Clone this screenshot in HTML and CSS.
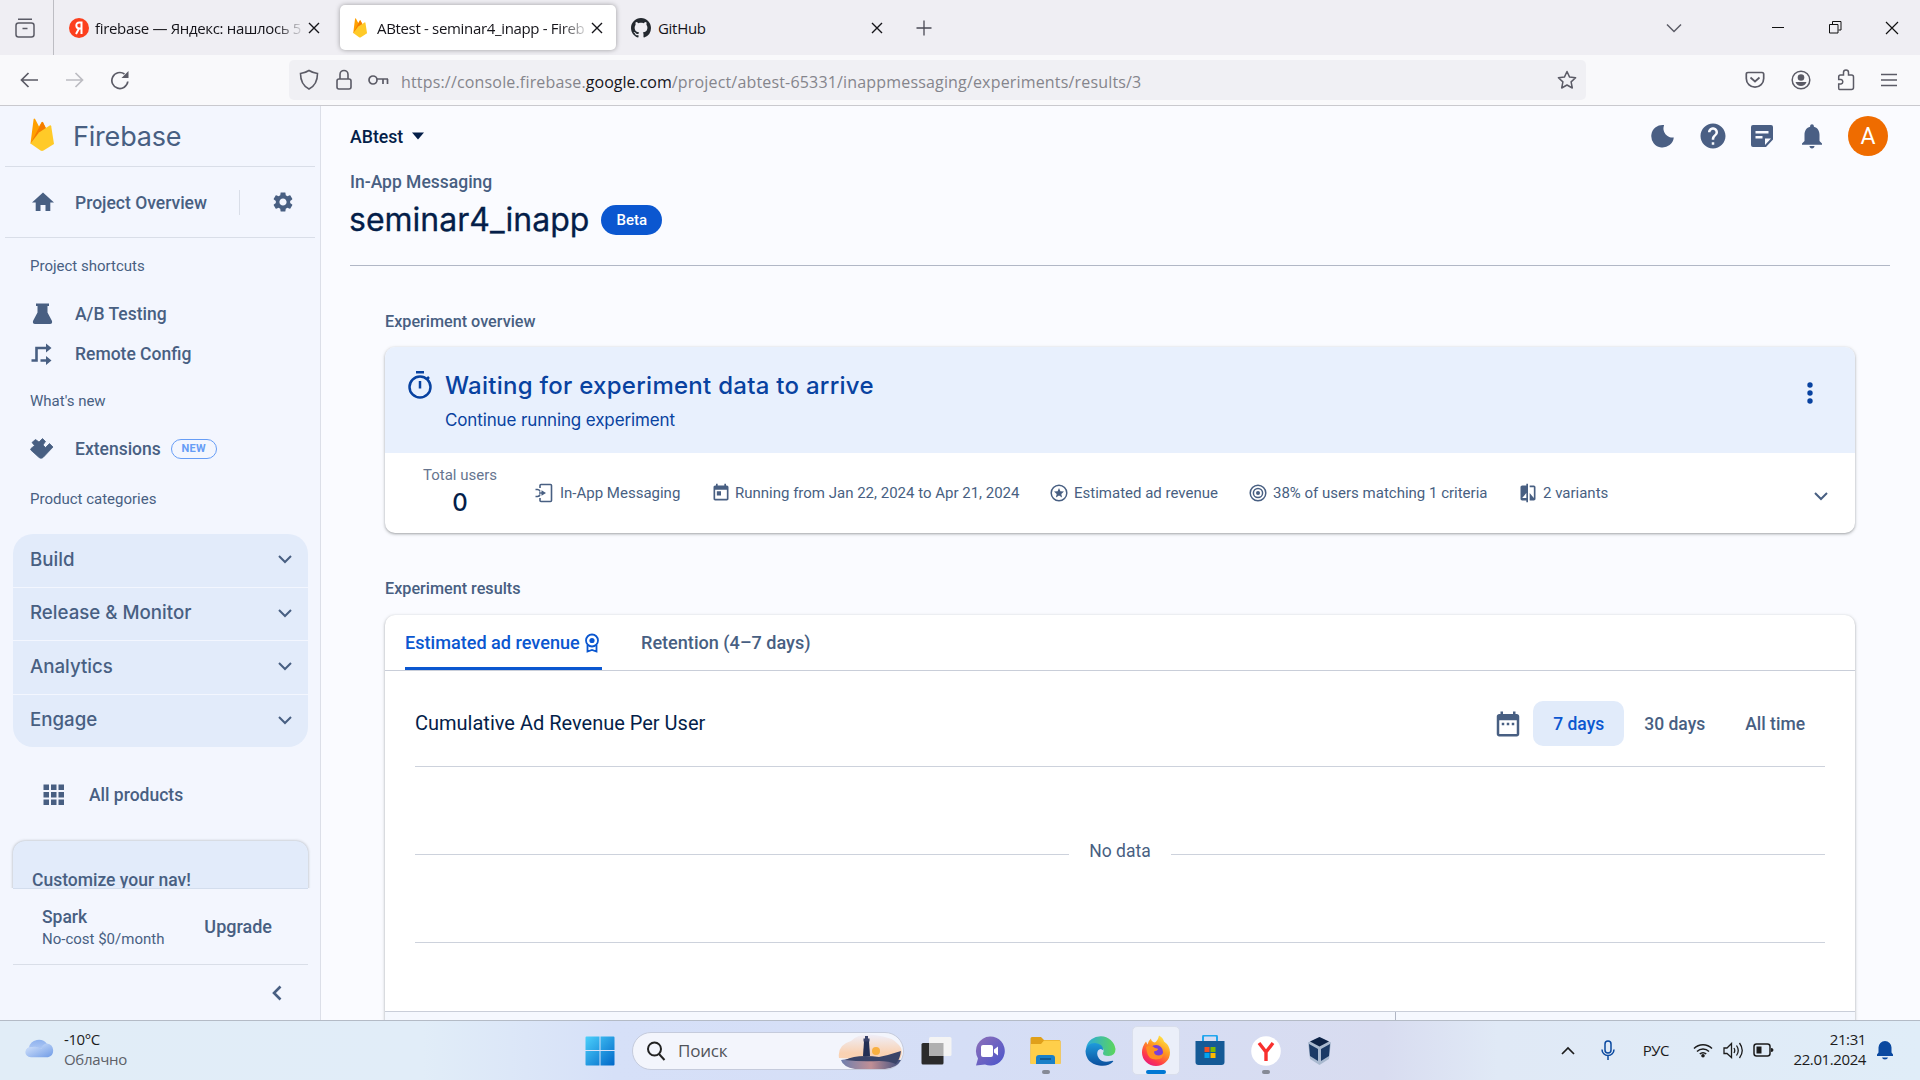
FILE: index.html
```html
<!DOCTYPE html>
<html lang="en">
<head>
<meta charset="utf-8">
<title>ABtest - seminar4_inapp - Firebase console</title>
<link rel="stylesheet" href="styles.css">
</head>
<body>
<svg class="defs" width="0" height="0">
  <defs>
    <symbol id="x" viewBox="0 0 12 12"><path d="M1 1l10 10M11 1L1 11" fill="none" stroke="currentColor" stroke-width="1.4"/></symbol>
    <symbol id="down" viewBox="0 0 14 9"><path d="M1 1l6 6 6-6" fill="none" stroke="currentColor" stroke-width="2"/></symbol>
    <symbol id="flame" viewBox="0 0 24 34">
      <path d="M.5 25.500L3.600 1.200q.5-1.500 1.500-.2L9 8.400l2.500-4.200q.8-1 1.500 0l6 12z" fill="#ffa000"/>
      <path d="M.5 25.500L11.800 4.500q.6-.8 1.200 0l4.500 9z" fill="#f57c00"/>
      <path d="M.5 25.500L9 14.500 19.700 7.600q1.200-.7 1.500.6L24 26l-10.500 6.600q-1.500.8-3 0z" fill="#ffca28"/>
    </symbol>
  </defs>
</svg>

<div class="tabstrip">
  <div class="view"><svg width="20" height="20" viewBox="0 0 20 20"><g fill="none" stroke="#5b5b66" stroke-width="1.500"><rect x="1" y="5" width="18" height="14" rx="2.500"/><path d="M3 1.200h14M7.500 10.500h5"/></g></svg></div>
  <div class="tab tab-first">
    <svg class="fav" width="20" height="20"><circle cx="10" cy="10" r="10" fill="#fc3f1d"/><path d="M12.500 16V4.500h-2.200c-4 0-4 6 .2 6h2M10 10.500L7 16" fill="none" stroke="#fff" stroke-width="2"/></svg>
    <span class="tab-title fade">firebase — Яндекс: нашлось 5</span>
    <svg class="close" width="12" height="12"><use href="#x"/></svg>
  </div>
  <div class="tab tab-active">
    <svg class="fav" width="18" height="20"><use href="#flame"/></svg>
    <span class="tab-title fade">ABtest - seminar4_inapp - Fireb</span>
    <svg class="close" width="12" height="12"><use href="#x"/></svg>
  </div>
  <div class="tab tab-last">
    <svg class="fav" width="20" height="20" viewBox="0 0 16 16"><path fill="#24292f" d="M8 0C3.580 0 0 3.580 0 8c0 3.540 2.290 6.530 5.470 7.590.4.070.55-.17.55-.38 0-.19-.01-.82-.01-1.490-2.010.37-2.530-.49-2.690-.94-.09-.23-.48-.94-.82-1.130-.28-.15-.68-.52-.01-.53.63-.01 1.080.58 1.230.82.72 1.210 1.870.87 2.330.66.070-.52.28-.87.51-1.070-1.780-.2-3.640-.89-3.640-3.950 0-.87.31-1.590.82-2.150-.08-.2-.36-1.020.08-2.120 0 0 .67-.21 2.200.82.64-.18 1.320-.27 2-.27.68 0 1.360.09 2 .27 1.530-1.040 2.200-.82 2.200-.82.44 1.100.16 1.920.08 2.120.51.56.82 1.270.82 2.150 0 3.070-1.870 3.750-3.650 3.950.29.25.54.73.54 1.480 0 1.070-.01 1.930-.01 2.200 0 .21.15.46.55.38A8.013 8.013 0 0 0 16 8c0-4.420-3.580-8-8-8z"/></svg>
    <span class="tab-title">GitHub</span>
    <svg class="close" width="12" height="12"><use href="#x"/></svg>
  </div>
  <svg class="plus" width="16" height="16"><path d="M8 .5v15M.5 8h15" stroke="#4a4a55" stroke-width="1.300"/></svg>
  <div class="window">
    <svg width="16" height="10"><path d="M1 1.500l7 7 7-7" fill="none" stroke="#5b5b66" stroke-width="1.500"/></svg>
    <svg width="12" height="12"><path d="M0 5.500h12" stroke="#111"/></svg>
    <svg width="13" height="13"><path d="M.5 3.500h8.500v8.500H.5zM3.500 3V.5H12V9H9.500" fill="none" stroke="#111"/></svg>
    <svg width="14" height="14"><path d="M1 1l12 12M13 1L1 13" stroke="#111" stroke-width="1.200"/></svg>
  </div>
</div>

<div class="toolbar">
  <div class="navbtns">
    <svg width="19" height="16"><path d="M18 8H1.500M8.500 1l-7 7 7 7" fill="none" stroke="#5b5b66" stroke-width="1.700"/></svg>
    <svg width="19" height="16"><path d="M1 8h16.500M10.500 1l7 7-7 7" fill="none" stroke="#bcbcc2" stroke-width="1.700"/></svg>
    <svg width="20" height="20"><path d="M17.800 11.500A8 8 0 1 1 14.500 4" fill="none" stroke="#5b5b66" stroke-width="1.700"/><path d="M18.500 1v7H11.500z" fill="#5b5b66"/></svg>
  </div>
  <div class="urlbar">
    <svg width="20" height="22"><path d="M10 1.500C13 3.500 16 4.200 18.500 4.500c0 7-2.500 12.500-8.500 15.500C4 17 1.500 11.500 1.500 4.500 4 4.200 7 3.500 10 1.500z" fill="none" stroke="#5b5b66" stroke-width="1.600"/></svg>
    <svg class="u2" width="16" height="22"><g fill="none" stroke="#5b5b66" stroke-width="1.600"><rect x="1" y="10" width="14" height="10" rx="2"/><path d="M4 10V5.500a4 4 0 0 1 8 0V10"/></g></svg>
    <svg class="u3" width="21" height="12"><g fill="none" stroke="#5b5b66" stroke-width="1.700"><circle cx="5" cy="6" r="4"/><path d="M9 5h11M15 5v5M19.500 5v5"/></g></svg>
    <span class="url">https://console.firebase.<b>google.com</b>/project/abtest-65331/inappmessaging/experiments/results/3</span>
    <svg class="star" width="20" height="20" viewBox="0 0 20 20"><path d="M10 1.500l2.600 5.600 6 .7-4.500 4.100 1.200 6.100L10 15l-5.300 3 1.200-6.100L1.400 7.800l6-.7z" fill="none" stroke="#5b5b66" stroke-width="1.500" stroke-linejoin="round"/></svg>
  </div>
  <div class="tools">
    <svg width="20" height="18"><g fill="none" stroke="#5b5b66" stroke-width="1.700"><path d="M3 1.500h14q1.700 0 1.700 1.700V7.500a8.700 8.700 0 0 1-17.400 0V3.200q0-1.700 1.700-1.700z"/><path d="M5.500 6.500L10 10.500l4.500-4"/></g></svg>
    <svg width="20" height="20"><circle cx="10" cy="10" r="8.800" fill="none" stroke="#5b5b66" stroke-width="1.500"/><circle cx="10" cy="7.500" r="3.300" fill="#5b5b66"/><path d="M4.500 12h11q-1.500 4-5.500 4t-5.500-4z" fill="#5b5b66"/></svg>
    <svg width="18" height="22"><path d="M2.500 20.500h12q2 0 2-2V8q0-2-2-2h-3V3.500a2 2 0 0 0-5 0V6H3.500Q1.700 6 1.700 8v2.500H4a2.300 2.300 0 0 1 0 4.500H1.700v4q0 1.500.8 1.500z" fill="none" stroke="#5b5b66" stroke-width="1.500"/></svg>
    <svg width="16" height="14"><path d="M0 1.500h16M0 7h16M0 12.500h16" stroke="#5b5b66" stroke-width="1.500"/></svg>
  </div>
</div>

<div class="page">
  <aside class="side">
    <div class="brand"><svg width="24" height="34"><use href="#flame"/></svg><span>Firebase</span></div>
    <div class="overview">
      <svg width="26" height="24" viewBox="0 0 26 24"><path d="M10.500 21v-6h5v6h4.800v-8.500H24L13 2.500 2 12.500h3.700V21z" fill="currentColor"/></svg>
      <span class="ov">Project Overview</span>
      <i></i>
      <svg width="24" height="24" viewBox="0 0 24 24"><path fill="currentColor" d="M19.140 12.940c.04-.3.060-.61.060-.94 0-.32-.02-.64-.07-.94l2.030-1.580c.18-.14.23-.41.12-.61l-1.920-3.320c-.12-.22-.37-.29-.59-.22l-2.390.96c-.5-.38-1.030-.7-1.620-.94l-.36-2.540c-.04-.24-.24-.41-.48-.41h-3.840c-.24 0-.43.17-.47.41l-.36 2.540c-.59.24-1.130.57-1.620.94l-2.390-.96c-.22-.08-.47 0-.59.22L2.740 8.870c-.12.21-.08.47.12.61l2.030 1.580c-.05.3-.09.63-.09.94s.02.64.070.94l-2.030 1.580c-.18.14-.23.41-.12.61l1.920 3.320c.12.22.37.29.59.22l2.390-.96c.5.38 1.030.7 1.620.94l.36 2.540c.05.24.24.41.48.41h3.840c.24 0 .44-.17.47-.41l.36-2.540c.59-.24 1.130-.56 1.620-.94l2.390.96c.22.08.47 0 .59-.22l1.920-3.320c.12-.22.070-.47-.12-.61l-2.010-1.580zM12 15.600c-1.980 0-3.600-1.620-3.600-3.600s1.620-3.600 3.600-3.600 3.600 1.620 3.600 3.600-1.620 3.600-3.600 3.600z"/></svg>
    </div>
    <div class="label l1"><span>Project shortcuts</span></div>
    <div class="item i1"><svg width="22" height="24"><path d="M5 1.500h13V4h-1.500v6.500L21 19q.6 3-2 3H4q-2.600 0-2-3L6.500 10.500V4H5z" fill="currentColor"/></svg><span>A/B Testing</span></div>
    <div class="item"><svg width="22" height="24"><path d="M.5 18.500h5V6H16M9.500 18.500H16" fill="none" stroke="currentColor" stroke-width="2.600"/><path d="M15 1.500L20.500 6 15 10.500zM15 14l5.500 4.500L15 23z" fill="currentColor"/></svg><span>Remote Config</span></div>
    <div class="label l2"><span>What's new</span></div>
    <div class="item i2"><svg width="24" height="24" viewBox="0 0 24 24"><path d="M1 11.500l3.500-3L2 5.500l3.500-3L9 5l3.500-3.500 3 3L13 8l2.500 2.500 4-4L23 10l-8.500 9q-3 4-6 1L.8 13q-.5-.8.2-1.500z" fill="currentColor" stroke="currentColor" stroke-width=".8" stroke-linejoin="round"/></svg><span>Extensions</span><em>NEW</em></div>
    <div class="label l3"><span>Product categories</span></div>
    <div class="group">
      <div><span>Build</span><svg width="14" height="9"><use href="#down"/></svg></div>
      <div><span>Release &amp; Monitor</span><svg width="14" height="9"><use href="#down"/></svg></div>
      <div><span>Analytics</span><svg width="14" height="9"><use href="#down"/></svg></div>
      <div><span>Engage</span><svg width="14" height="9"><use href="#down"/></svg></div>
    </div>
    <div class="all"><svg width="22" height="22"><path d="M.5.500h5.500v5.500H.5zM8 .5h5.500v5.500H8zM15.500.500H21v5.500h-5.500zM.5 8h5.500v5.500H.5zM8 8h5.500v5.500H8zM15.500 8H21v5.500h-5.500zM.5 15.500h5.500V21H.5zM8 15.500h5.500V21H8zM15.500 15.500H21V21h-5.500z" fill="currentColor"/></svg><span>All products</span></div>
    <div class="promo-clip"><div class="promo"><span>Customize your nav!</span></div></div>
    <div class="plan"><div><b>Spark</b><small>No-cost $0/month</small></div><span>Upgrade</span></div>
    <div class="collapse"><svg width="10" height="16"><path d="M8.500 1.500L2 8l6.500 6.500" fill="none" stroke="currentColor" stroke-width="2.600"/></svg></div>
  </aside>

  <main class="main">
    <div class="appbar">
      <span class="proj">ABtest</span><svg width="14" height="8"><path d="M1 .5h12l-6 7z" fill="#041e49"/></svg>
      <div class="appicons">
        <svg width="24" height="24" viewBox="0 0 24 24"><path d="M13 1.500A9 9 0 0 0 22.800 13.500 11.300 11.300 0 1 1 13 1z" fill="currentColor"/></svg>
        <svg width="30" height="30" viewBox="0 0 24 24"><path fill="currentColor" d="M12 2C6.480 2 2 6.480 2 12s4.480 10 10 10 10-4.480 10-10S17.520 2 12 2zm1 17h-2v-2h2v2zm2.070-7.750l-.9.920C13.450 12.900 13 13.500 13 15h-2v-.5c0-1.100.45-2.100 1.170-2.830l1.240-1.260c.37-.36.59-.86.59-1.410 0-1.100-.9-2-2-2s-2 .9-2 2H8c0-2.210 1.790-4 4-4s4 1.790 4 4c0 .88-.36 1.680-.93 2.250z"/></svg>
        <svg width="24" height="24" viewBox="0 0 24 24"><path fill="currentColor" fill-rule="evenodd" d="M3 1h18q2 0 2 2v12.500L16 23H3q-2 0-2-2V3q0-2 2-2zm2.500 6v2.500h13V7zm0 5v2.500h7V12zm9.500 9l6-6.500h-6z"/></svg>
        <svg class="bell" width="30" height="30" viewBox="0 0 24 24"><path fill="currentColor" d="M12 22c1.100 0 2-.9 2-2h-4c0 1.100.89 2 2 2zm6-6v-5c0-3.070-1.640-5.640-4.500-6.320V4c0-.83-.67-1.500-1.500-1.500s-1.500.67-1.500 1.500v.68C7.630 5.360 6 7.920 6 11v5l-2 2v1h16v-1l-2-2z"/></svg>
        <span class="avatar">A</span>
      </div>
    </div>
    <div class="crumb"><span>In-App Messaging</span></div>
    <div class="title"><h1>seminar4_inapp</h1><span class="beta">Beta</span></div>

    <div class="section">
      <h2 class="h-a"><span>Experiment overview</span></h2>
      <div class="card">
        <div class="banner">
          <svg width="26" height="30" viewBox="0 0 26 30"><g fill="none" stroke="#0842a0" stroke-width="2.500"><circle cx="13" cy="17" r="10.500"/><path d="M9 2.300h8M13 11v7.500M20 9l2-2"/></g></svg>
          <div class="btext"><b>Waiting for experiment data to arrive</b><span>Continue running experiment</span></div>
          <svg class="kebab" width="6" height="22"><g fill="#0842a0"><circle cx="3" cy="3" r="2.700"/><circle cx="3" cy="11" r="2.700"/><circle cx="3" cy="19" r="2.700"/></g></svg>
        </div>
        <div class="facts">
          <div class="total"><span>Total users</span><b>0</b></div>
          <div class="fact f1"><svg width="18" height="20" viewBox="0 0 18 20"><path d="M5 5V2.500q0-1 1-1h9.500q1 0 1 1v15q0 1-1 1H6q-1 0-1-1V15M.5 6.500h2q2 0 2.500 2M.5 13.500h2q2 0 2.500-2M4 10h4" fill="none" stroke="currentColor" stroke-width="1.600"/><path d="M6.500 7.200l4.500 2.800-4.500 2.800z" fill="currentColor"/></svg><span>In-App Messaging</span></div>
          <div class="fact f2"><svg width="20" height="20" viewBox="0 0 24 24"><path fill="currentColor" d="M19 3h-1V1h-2v2H8V1H6v2H5c-1.110 0-1.990.9-1.990 2L3 19c0 1.100.89 2 2 2h14c1.100 0 2-.9 2-2V5c0-1.100-.9-2-2-2zm0 16H5V8h14v11zM7 10h5v5H7z"/></svg><span>Running from Jan 22, 2024 to Apr 21, 2024</span></div>
          <div class="fact f3"><svg width="18" height="18"><circle cx="9" cy="9" r="7.800" fill="none" stroke="currentColor" stroke-width="1.500"/><path d="M9 4l1.400 3.300 3.600.3-2.700 2.400.8 3.500L9 11.600l-3.100 1.900.8-3.500L4 7.600l3.600-.3z" fill="currentColor"/></svg><span>Estimated ad revenue</span></div>
          <div class="fact f4"><svg width="18" height="18"><g fill="none" stroke="currentColor" stroke-width="1.500"><circle cx="9" cy="9" r="7.800"/><circle cx="9" cy="9" r="4.600"/></g><circle cx="9" cy="9" r="2" fill="currentColor"/></svg><span>38% of users matching 1 criteria</span></div>
          <div class="fact f5"><svg width="20" height="20" viewBox="0 0 24 24"><path fill="currentColor" d="M10 3H5c-1.100 0-2 .9-2 2v14c0 1.100.9 2 2 2h5v2h2V1h-2v2zm0 15H5l5-6v6zm9-15h-5v2h5v13l-5-6v9h5c1.100 0 2-.9 2-2V5c0-1.100-.9-2-2-2z"/></svg><span>2 variants</span></div>
          <svg class="fdown" width="14" height="9"><use href="#down"/></svg>
        </div>
      </div>

      <h2 class="h-b"><span>Experiment results</span></h2>
      <div class="card results">
        <div class="rtabs">
          <div class="on"><span>Estimated ad revenue</span><svg width="16" height="20" viewBox="0 0 16 20"><g fill="none" stroke="currentColor" stroke-width="1.800"><circle cx="8" cy="7.500" r="6"/><path d="M3.500 12v6.500L8 17l4.500 1.500V12"/></g><circle cx="8" cy="7.500" r="2.600" fill="currentColor"/></svg></div>
          <div class="off"><span>Retention (4–7 days)</span></div>
        </div>
        <div class="chart">
          <div class="chead">
            <span class="ctitle">Cumulative Ad Revenue Per User</span>
            <svg width="30" height="30" viewBox="0 0 24 24"><path fill="currentColor" d="M9 11H7v2h2v-2zm4 0h-2v2h2v-2zm4 0h-2v2h2v-2zm2-7h-1V2h-2v2H8V2H6v2H5c-1.110 0-1.990.9-1.990 2L3 20c0 1.100.89 2 2 2h14c1.100 0 2-.9 2-2V6c0-1.100-.9-2-2-2zm0 16H5V9h14v11z"/></svg>
            <span class="range sel">7 days</span><span class="range">30 days</span><span class="range">All time</span>
          </div>
          <div class="grid g1"></div>
          <div class="grid g2"><span>No data</span></div>
          <div class="grid g3"></div>
        </div>
        <div class="thead"><div></div><div></div></div>
      </div>
    </div>
  </main>
</div>

<div class="taskbar">
  <div class="weather">
    <svg width="30" height="22"><defs><linearGradient id="cl" x1="0" y1="0" x2="1" y2="1"><stop offset="0" stop-color="#dce9fd"/><stop offset="1" stop-color="#6f9be6"/></linearGradient><linearGradient id="cl2" x1="0" y1="0" x2="0" y2="1"><stop offset="0" stop-color="#8fb2ee"/><stop offset="1" stop-color="#c6dafa"/></linearGradient></defs><path d="M5 20a5 5 0 0 1-1-9.500A10 9.500 0 0 1 22 7z" fill="url(#cl2)"/><path d="M22 6.500a7 7 0 0 1 1 13.700H6A6 5 0 0 1 7 10q6-1 9 2 1-5 6-5.500z" fill="url(#cl)"/></svg>
    <div><span class="temp">-10°C</span><span class="dim">Облачно</span></div>
  </div>
  <div class="apps">
    <svg class="win" width="30" height="30"><defs><linearGradient id="wn" x1="0" y1="0" x2="1" y2="1"><stop offset="0" stop-color="#4cd0fb"/><stop offset="1" stop-color="#0067c8"/></linearGradient></defs><path d="M1.500.500h13v13.500H.5V1.500q0-1 1-1zM15.500.500h13q1 0 1 1V14h-14zM.5 15h14v14.500h-13q-1 0-1-1zM15.500 15h14v13.500q0 1-1 1h-13z" fill="url(#wn)"/></svg>
    <div class="search"><svg width="20" height="20"><g fill="none" stroke="#222" stroke-width="2"><circle cx="8.500" cy="8" r="6.500"/><path d="M13 13l5.500 6"/></g></svg><span>Поиск</span>
      <svg class="pic" width="66" height="36"><defs><linearGradient id="sky" x1="0" y1="0" x2="0" y2="1"><stop offset="0" stop-color="#eeedf8"/><stop offset=".7" stop-color="#fbc9a0"/></linearGradient><linearGradient id="sea" x1="0" y1="0" x2="1" y2="0"><stop offset="0" stop-color="#6f7fae"/><stop offset=".5" stop-color="#c08f95"/><stop offset="1" stop-color="#3d4f80"/></linearGradient></defs><path d="M2 25Q0 12 14 8q8-8 24-6 18 2 24 10 6 6 0 16z" fill="url(#sky)" opacity=".8"/><circle cx="39" cy="18" r="4" fill="#f9b040"/><path d="M4 27q18-4 60 0-4 8-16 9H18Q6 34 4 27z" fill="url(#sea)"/><path d="M8 27q8-4 20-4 8 0 14 1 10-2 22-6-1 8-5 13-7-3-17-3-18 1-34-1z" fill="#3a4468"/><path d="M27 8h5l1 15h-7z" fill="#243055"/><path d="M26.500 5.500h6V8.500h-6zM28 3h3v3h-3z" fill="#39426a"/></svg>
    </div>
    <svg class="a1" width="31" height="28"><rect x=".5" y="6" width="22" height="21.500" rx="1.500" fill="#2b2b2b"/><rect x="8" y="0" width="22.500" height="19" rx="1.500" fill="#f4f4f4"/><path d="M8 6h14.500v13H8z" fill="#b0b0b0"/></svg>
    <svg class="a2" width="30" height="30"><defs><linearGradient id="ch" x1="0" y1="0" x2="1" y2="1"><stop offset="0" stop-color="#8f70b8"/><stop offset="1" stop-color="#4a55cc"/></linearGradient></defs><path d="M15 .5a14.500 14.500 0 1 1-5 28L1 29.500l2-7A14.500 14.500 0 0 1 15 .5z" fill="url(#ch)"/><rect x="6" y="9" width="12" height="12" rx="2" fill="#fff"/><path d="M19 13.500l4-3v9l-4-3z" fill="#fff"/></svg>
    <svg class="a3" width="31" height="30"><path d="M.5 2.500Q.5 1 2 1h9l3 3H29q1.500 0 1.500 1.500V27q0 1-1 1h-28q-1 0-1-1z" fill="#e0a01a"/><path d="M.5 8H11l3-3.500h15q1.500 0 1.500 1.500V28H.5z" fill="#ffcf4a"/><path d="M6 28v-6q0-3 3-3h13q3 0 3 3v6z" fill="#1a80c8"/><path d="M10 23h11" stroke="#0f4f85" stroke-width="1.500"/></svg>
    <svg class="a4" width="31" height="31" viewBox="0 0 31 31"><defs><linearGradient id="e1" x1="0" y1="0" x2="1" y2="0"><stop offset="0" stop-color="#2aa8e0"/><stop offset="1" stop-color="#5cd65a"/></linearGradient><linearGradient id="e2" x1="0" y1="0" x2="0" y2="1"><stop offset="0" stop-color="#1f9bdc"/><stop offset="1" stop-color="#0b4f9e"/></linearGradient></defs><path d="M1 13A15 15 0 0 1 30.500 14q0 7-7 7-6 0-5.500-3 1.500-3-.5-5Q11 6 1 13z" fill="url(#e1)"/><path d="M.5 16Q2 8 10 8q8 .5 8.500 7.500-3-3-5.500 0-2 4 1 8 4 5 12 2.500 3-1 2 .8Q23 32 14 30.500 1 28 .5 16z" fill="url(#e2)"/></svg>
    <div class="tile"><svg width="30" height="31" viewBox="0 0 30 31"><defs><linearGradient id="ff" x1=".8" y1="0" x2=".2" y2="1"><stop offset="0" stop-color="#fff04a"/><stop offset=".4" stop-color="#ff9a1f"/><stop offset=".75" stop-color="#ff3a4a"/><stop offset="1" stop-color="#e31587"/></linearGradient></defs><path d="M18 .5q4 2 5 6 6 4 6 11a14 13.500 0 0 1-28 0q0-6 4-11l1.500 3q1-4 3.500-6 0 3 4 4 3-2 4-7z" fill="url(#ff)"/><circle cx="15" cy="17" r="7" fill="#7a3fd8"/><path d="M5 12q5-3 9 1 3 0 3 1.500-1 1.500-4 2 0 4 5 4 4-.5 5-4 0 8-8 8T6 17z" fill="#ff9020"/></svg></div>
    <svg class="a5" width="30" height="31"><path d="M8 8V2q0-1.500 1.500-1.500h11Q22 .5 22 2v6" fill="none" stroke="#22a6ee" stroke-width="2"/><path d="M.5 6h29v21q0 3-3 3h-23q-3 0-3-3z" fill="#155a96"/><path d="M9.500 12h5v5h-5z" fill="#f25022"/><path d="M15.500 12h5v5h-5z" fill="#7fba00"/><path d="M9.500 18h5v5h-5z" fill="#00a4ef"/><path d="M15.500 18h5v5h-5z" fill="#ffb900"/></svg>
    <svg class="a6" width="30" height="30"><circle cx="15" cy="15" r="14.800" fill="#fff"/><path d="M8 7l7 9 7-9M15 15v10" fill="none" stroke="#f8302e" stroke-width="3.400"/></svg>
    <svg class="a7" width="27" height="30"><path d="M13.500 1L25 6.500 23 23l-9.500 6L4 23 2 6.500z" fill="#a9b9cf"/><path d="M13.500 1L23 5.500l-9.500 5-9.500-5z" fill="#0d2347"/><path d="M3 8l9 5v12l-8-5zM24 8l-9 5v12l8-5z" fill="#1b3a66"/></svg>
  </div>
  <div class="dots"><i></i><b></b><i></i></div>
  <div class="tray">
    <svg width="14" height="9"><path d="M1 8l6-6 6 6" fill="none" stroke="#1c1c1c" stroke-width="1.700"/></svg>
    <svg class="r1" width="14" height="20"><g fill="none" stroke="#0a49a0" stroke-width="1.500"><rect x="4" y="1" width="6" height="12" rx="3"/><path d="M1 9.500a6 6 0 0 0 12 0M7 15.500V20"/></g></svg>
    <span class="r2">РУС</span>
    <svg class="r3" width="20" height="16"><g fill="none" stroke="#1c1c1c" stroke-width="1.500"><path d="M1 6.500a12.500 12.500 0 0 1 18 0M4 9.500a8.500 8.500 0 0 1 12 0M6.800 12a4.500 4.500 0 0 1 6.400 0"/></g><circle cx="10" cy="13.800" r="1.800" fill="#1c1c1c"/></svg>
    <svg class="r4" width="21" height="17"><g fill="none" stroke="#1c1c1c" stroke-width="1.300"><path d="M1 6h3l4.500-4.500v14L4 11.500H1zM11 6q1.500 2.500 0 5M13.500 3.500q3.500 5 0 10M16.500 1q5.500 7.500 0 15"/></g></svg>
    <svg class="r5" width="21" height="14"><rect x="1" y="1" width="16" height="12" rx="2.500" fill="none" stroke="#1c1c1c" stroke-width="1.500"/><path d="M3.500 3.500h5v7h-5zM18 5q2.500 0 2.500 2T18 9z" fill="#1c1c1c"/></svg>
    <div class="clock"><span>21:31</span><span>22.01.2024</span></div>
    <svg class="r6" width="18" height="20"><path d="M1 16v-1.500l1.500-2V7.500a6.500 6.500 0 0 1 13 0v5l1.500 2V16zM6 17.500h6q-.5 2-3 2t-3-2z" fill="#0a49a0"/></svg>
  </div>
</div>
</body>
</html>
```

FILE: styles.css
```css
* { box-sizing: border-box; }
body { margin: 0; width: 1920px; height: 1080px; overflow: hidden; display: flex; flex-direction: column; font-family: Roboto, sans-serif; color: #485f82; background: #fafbff; }
svg { display: block; flex: none; }
.defs { position: absolute; }
h1, h2 { margin: 0; }
span, b, small { white-space: nowrap; }

/* browser tabs */
.tabstrip { height: 55px; flex: none; display: flex; align-items: center; background: #efeef3; font-family: "Open Sans", sans-serif; font-size: 15px; color: #15141a; }
.view { width: 54px; height: 55px; padding: 18px 0 0 15px; border-right: 1px solid #bdbdc3; }
.tab { display: flex; align-items: center; height: 45px; }
.tab-title { flex: 1; overflow: hidden; line-height: 22px; }
.fade { letter-spacing: -.33px; -webkit-mask-image: linear-gradient(90deg, #000 calc(100% - 30px), transparent); mask-image: linear-gradient(90deg, #000 calc(100% - 30px), transparent); }
.tab-first { width: 271px; padding-left: 15px; margin-right: 15px; }
.tab-first .tab-title { margin-left: 6px; }
.tab-first .close { margin: 0 5px 0 3px; }
.tab-active { width: 276px; padding-left: 11px; background: #fff; border-radius: 5px; box-shadow: 0 0 5px rgba(0,0,0,.35); }
.tab-active .tab-title { margin-left: 8px; }
.tab-active .close { margin: 0 13px 0 1px; }
.tab-last { width: 276px; padding-left: 15px; }
.tab-last .tab-title { margin-left: 7px; letter-spacing: -.3px; }
.tab-last .close { margin-right: 9px; }
.plus { margin-left: 24px; }
.window { margin-left: auto; margin-right: 21px; display: flex; align-items: center; }
.window svg:nth-child(2) { margin-left: 90px; }
.window svg:nth-child(3) { margin-left: 45px; }
.window svg:nth-child(4) { margin-left: 43px; }

/* address row */
.toolbar { height: 51px; flex: none; display: flex; align-items: center; background: #f9f9fb; border-bottom: 1px solid #c9c9ce; }
.navbtns { width: 289px; padding-left: 20px; display: flex; align-items: center; gap: 26px; }
.urlbar { width: 1297px; height: 40px; border-radius: 5px; background: #f0f0f4; display: flex; align-items: center; padding: 0 9px 0 10px; }
.u2 { margin-left: 17px; }
.u3 { margin-left: 16px; }
.url { margin-left: 12px; font: 16px/24px "Open Sans", sans-serif; letter-spacing: .17px; color: #85858c; padding-top: 4px; }
.url b { font-weight: 400; color: #15141a; letter-spacing: 0; }
.star { margin-left: auto; }
.tools { margin-left: auto; margin-right: 23px; display: flex; align-items: center; gap: 26px; }

.page { height: 914px; flex: none; display: flex; overflow: hidden; }

/* side navigation */
.side { width: 321px; flex: none; background: #f3f6fe; border-right: 1px solid #dcdfe8; display: flex; flex-direction: column; }
.brand { height: 61px; margin: 0 5px; padding-left: 25px; display: flex; align-items: center; border-bottom: 1px solid #d9dee8; font: 27px/40px Inter, sans-serif; letter-spacing: -.2px; }
.brand svg { margin-bottom: 2px; }
.brand span { margin-left: 19px; padding-top: 1px; }
.overview { height: 71px; margin: 0 5px; padding-left: 25px; display: flex; align-items: center; border-bottom: 1px solid #d9dee8; font-size: 17.500px; font-weight: 500; }
.ov { width: 164px; margin-left: 19px; padding-top: 2px; }
.overview i { width: 1px; height: 25px; background: #d9dee8; margin-right: 31px; }
.label { height: 40px; flex: none; display: flex; align-items: center; padding-left: 30px; font-size: 15px; }
.l1 { margin-top: 8px; }
.l2 { margin-top: 7px; }
.l3 { margin-top: 10px; }
.item { height: 40px; flex: none; display: flex; align-items: center; padding-left: 31px; font-size: 17.500px; font-weight: 500; }
.item svg { width: 24px; margin-right: 20px; }
.i1 { margin-top: 8px; }
.i2 { margin-top: 8px; }
.i2 svg { margin-left: -1px; margin-right: 21px; }
.item em { margin-left: 10px; width: 46px; height: 20px; border: 1px solid #669df6; border-radius: 10px; color: #669df6; font: 700 11px/18px Roboto, sans-serif; letter-spacing: .3px; text-align: center; }
.group { width: 295px; margin: 15px 0 0 13px; border-radius: 20px; background: #e2ebfa; overflow: hidden; flex: none; font: 500 18.700px/26px Inter, sans-serif; }
.group div { height: 53px; display: flex; align-items: center; justify-content: space-between; padding: 0 16px 2px 17px; border-bottom: 1px solid #f3f6fe; }
.group div:nth-child(1), .group div:nth-child(3) { height: 54px; }
.group div:last-child { height: 52px; border: 0; }
.all { height: 40px; flex: none; margin-top: 28px; padding-left: 43px; display: flex; align-items: center; gap: 24px; font-size: 17.500px; font-weight: 500; }
.promo-clip { height: 53px; flex: none; margin-top: 20px; padding: 6px 10px 0 13px; overflow: hidden; }
.promo { width: 295px; height: 80px; border-radius: 12px; background: #e2ebfa; box-shadow: 0 0 3px rgba(60,64,67,.4); padding: 27px 0 0 19px; font-size: 17.500px; line-height: 24px; font-weight: 500; }
.plan { width: 295px; height: 77px; margin-left: 13px; flex: none; border-top: 1px solid #d3dded; border-bottom: 1px solid #d9dee8; display: flex; justify-content: space-between; padding: 0 36px 0 29px; align-items: center; font-size: 18px; font-weight: 500; }
.plan div { display: flex; flex-direction: column; padding-top: 2px; }
.plan b { font-size: 17.500px; font-weight: 500; line-height: 23px; }
.plan small { font-size: 15px; font-weight: 400; line-height: 21px; }
.collapse { flex: 1; display: flex; align-items: center; padding-left: 272px; }

/* content */
.main { flex: 1; background: #fafbff; padding-left: 29px; }
.appbar { height: 60px; display: flex; align-items: center; color: #4a5f84; }
.proj { font-size: 17.700px; font-weight: 500; color: #041e49; margin-right: 8px; padding-top: 1px; }
.appicons { margin-left: auto; margin-right: 32px; display: flex; align-items: center; gap: 22px; }
.appicons svg:first-child { margin-right: 1px; }
.appicons .bell { margin: 0 -1px 0 1px; }
.avatar { width: 40px; height: 40px; border-radius: 50%; background: #ef6c00; color: #fff; font-size: 23px; line-height: 41px; text-align: center; }
.crumb { font-size: 17.500px; font-weight: 500; line-height: 22px; margin-top: 5px; }
.title { display: flex; align-items: center; width: 1540px; margin-top: -3px; padding-bottom: 15px; height: 76px; border-bottom: 1px solid #b1b7c6; }
.title h1 { font: 400 32px/40px Inter, sans-serif; color: #041e49; -webkit-text-stroke: .3px #041e49; margin-left: -1px; }
.beta { margin-left: 12px; width: 61px; height: 30px; border-radius: 15px; background: #0b57d0; color: #fff; font-size: 15px; font-weight: 500; line-height: 31px; text-align: center; }
.section { padding-left: 35px; width: 1505px; }
.section h2 { font-size: 16.200px; font-weight: 500; line-height: 20px; }
.h-a { padding-top: 46px; height: 81px; }
.h-b { padding-top: 46px; height: 82px; }
.card { width: 1470px; background: #fff; border-radius: 10px; overflow: hidden; box-shadow: 0 1px 3px 1px rgba(60,64,67,.15), 0 1px 2px rgba(60,64,67,.3); }
.banner { height: 106px; background: #e8f0fd; display: flex; color: #0842a0; padding: 23px 42px 0 22px; }
.btext { margin-left: 12px; display: flex; flex-direction: column; font-family: Inter, sans-serif; }
.btext b { font-size: 24px; font-weight: 500; line-height: 32px; letter-spacing: .27px; }
.btext span { font-size: 17px; line-height: 24px; margin-top: 6px; letter-spacing: -.13px; }
.kebab { margin: 12px 0 0 auto; }
.facts { height: 80px; display: flex; align-items: center; font-size: 15px; padding-left: 38px; }
.total { width: 74px; margin-right: 38px; text-align: center; color: #66758f; font-size: 15px; line-height: 20px; padding-bottom: 2px; }
.total b { display: block; font: 500 24px/32px Inter, sans-serif; color: #041e49; margin-top: 2px; }
.fact { display: flex; align-items: center; }
.f1 { width: 176px; gap: 7px; }
.f2 { width: 339px; gap: 4px; }
.f3 { width: 199px; gap: 6px; }
.f4 { width: 269px; gap: 6px; }
.f5 { gap: 5px; }
.fdown { margin-left: auto; margin-right: 27px; margin-top: 7px; }
.results { height: 420px; }
.rtabs { height: 56px; display: flex; border-bottom: 1px solid #c9ced9; padding-left: 20px; font-size: 18.100px; font-weight: 500; }
.rtabs div { height: 55px; display: flex; align-items: center; }
.rtabs .on { width: 197px; gap: 4px; color: #0b57d0; border-bottom: 3px solid #0b57d0; border-radius: 2px 2px 0 0; padding-top: 3px; }
.rtabs .off { margin-left: 39px; }
.chart { padding: 0 30px; height: 341px; border-bottom: 1px solid #c9ced9; }
.chead { height: 95px; padding-top: 10px; display: flex; align-items: center; }
.ctitle { font-size: 20px; color: #041e49; margin-right: auto; padding-bottom: 2px; }
.chead > svg { margin-right: 10px; }
.range { height: 45px; line-height: 46px; padding: 0 20px; border-radius: 10px; font-size: 17.500px; font-weight: 500; }
.sel { background: #e1ebfa; color: #0b57d0; }
.grid { height: 88px; border-top: 1px solid #cdd2dc; }
.g2 { text-align: center; line-height: 20px; font-size: 17.500px; }
.g2 span { display: inline-block; position: relative; top: -14px; background: #fff; padding: 0 20px; }
.thead { height: 24px; background: #f5f8fe; display: flex; }
.thead div:first-child { width: 1011px; border-right: 1px solid #b0b6c4; }

/* desktop taskbar */
.taskbar { height: 60px; border-top: 1px solid #b4bbc6; flex: none; position: relative; display: flex; align-items: center; font-family: "Open Sans", sans-serif; font-size: 15px; color: #1c1c1c; background: linear-gradient(90deg, #e1edf7 0, #e1edf8 22%, #d6e0f8 32%, #d5def6 50%, #d8dcf0 72%, #e0e9f6 78%, #e0edf8 100%); }
.weather { width: 585px; padding-left: 25px; display: flex; align-items: center; gap: 9px; }
.weather svg { margin-top: -6px; }
.weather div, .clock { display: flex; flex-direction: column; line-height: 20px; padding-bottom: 3px; letter-spacing: -.4px; }
.weather .dim { color: #5c6068; letter-spacing: -.3px; }
.apps { display: flex; align-items: center; }
.search { width: 272px; height: 38px; margin: 0 17px; border-radius: 19px; background: #f3f5fc; border: 1px solid #c5cbdc; display: flex; align-items: center; padding-left: 13px; font-size: 17px; color: #505359; }
.search span { margin-left: 12px; letter-spacing: -.2px; }
.pic { margin-left: auto; }
.a2 { margin-left: 23px; }
.a3 { margin-left: 25px; }
.a4 { margin-left: 24px; }
.tile { width: 48px; height: 49px; margin-left: 16px; border-radius: 5px; background: #ebeff9; border: 1px solid #d9deec; padding: 8px 0 0 8px; }
.a5 { margin-left: 15px; }
.a6 { margin-left: 26px; }
.a7 { margin-left: 25px; }
.dots { position: absolute; left: 1042px; top: 49px; display: flex; align-items: center; }
.dots i { width: 8px; height: 4px; border-radius: 2px; background: #858a96; }
.dots b { width: 20px; height: 4px; border-radius: 2px; background: #0078d4; margin: 0 96px; }
.tray { margin-left: auto; margin-right: 26px; display: flex; align-items: center; }
.tray > svg { margin-top: -1px; }
.tray .r1 { margin-left: 26px; }
.r2 { margin-left: 28px; padding-bottom: 2px; letter-spacing: -.5px; }
.tray .r3 { margin-left: 24px; }
.tray .r4 { margin-left: 10px; }
.tray .r5 { margin-left: 9px; }
.clock { width: 92px; text-align: right; }
.tray .r6 { margin-left: 10px; }
```
